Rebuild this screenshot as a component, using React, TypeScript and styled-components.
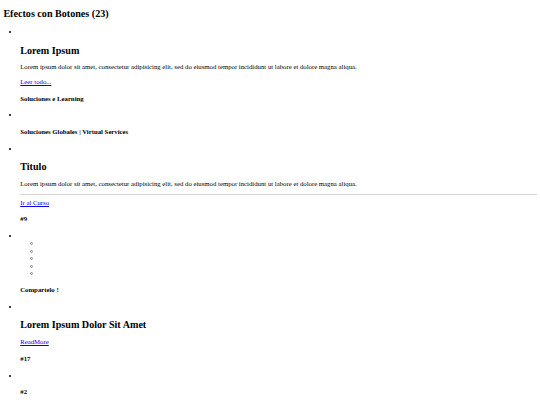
import React from "react";
import styled, { createGlobalStyle } from "styled-components";

const GlobalStyle = createGlobalStyle`
  html {
    background: #ffffff;
  }
  body {
    margin: 0 3.375px;
    font-family: "Liberation Serif", "Times New Roman", serif;
    font-size: 6.75px;
    line-height: 7.76px;
    color: #000000;
  }
`;

const PageTitle = styled.h2`
  font-size: 10.125px;
  line-height: 11.64px;
  font-weight: bold;
  margin: 8.4px 0;
`;

const EffectList = styled.ul`
  list-style-type: disc;
  margin: 8.4px 0;
  padding-left: 16.875px;
`;

const EffectItem = styled.li`
  display: list-item;
`;

const Thumb = styled.span`
  display: inline-block;
  width: 0;
  height: 0;
`;

const CardTitle = styled.h2`
  font-size: 10.125px;
  line-height: 11.64px;
  font-weight: bold;
  margin: 8.4px 0 7.1px;
`;

const CardText = styled.p`
  margin: 6.75px 0;
`;

const Divider = styled.hr`
  margin: 3.375px 0;
  border: none;
  border-top: 1px solid #d4d4d4;
  height: 0;
`;

const CardLink = styled.a`
  color: #0000ee;
  text-decoration: underline;
`;

const Caption = styled.h4`
  font-size: 6.75px;
  line-height: 7.76px;
  font-weight: bold;
  margin: 8.98px 0;
`;

const ShareList = styled.ul`
  list-style: none;
  margin: 0;
  padding-left: 16.875px;
`;

const ShareItem = styled.li`
  display: flex;
  align-items: center;
  height: 7.55px;

  &::before {
    content: "";
    display: block;
    box-sizing: border-box;
    width: 3px;
    height: 3px;
    margin-left: -7px;
    border: 1px solid #8a8a8a;
    border-radius: 50%;
  }
`;

const lorem =
  "Lorem ipsum dolor sit amet, consectetur adipisicing elit, sed do eiusmod tempor incididunt ut labore et dolore magna aliqua.";

export default function App() {
  return (
    <>
      <GlobalStyle />
      <PageTitle>Efectos con Botones (23)</PageTitle>
      <EffectList>
        <EffectItem>
          <Thumb />
          <CardTitle>Lorem Ipsum</CardTitle>
          <CardText>{lorem}</CardText>
          <CardLink href="#">Leer todo...</CardLink>
          <Caption>Soluciones e Learning</Caption>
        </EffectItem>
        <EffectItem>
          <Thumb />
          <Caption>Soluciones Globales | Virtual Services</Caption>
        </EffectItem>
        <EffectItem>
          <Thumb />
          <CardTitle>Titulo</CardTitle>
          <CardText>{lorem}</CardText>
          <Divider />
          <CardLink href="#">Ir al Curso</CardLink>
          <Caption>#9</Caption>
        </EffectItem>
        <EffectItem>
          <Thumb />
          <ShareList>
            {[0, 1, 2, 3, 4].map((i) => (
              <ShareItem key={i} />
            ))}
          </ShareList>
          <Caption>Compartelo !</Caption>
        </EffectItem>
        <EffectItem>
          <Thumb />
          <CardTitle>Lorem Ipsum Dolor Sit Amet</CardTitle>
          <CardLink href="#">ReadMore</CardLink>
          <Caption>#17</Caption>
        </EffectItem>
        <EffectItem>
          <Thumb />
          <Caption>#2</Caption>
        </EffectItem>
      </EffectList>
    </>
  );
}
